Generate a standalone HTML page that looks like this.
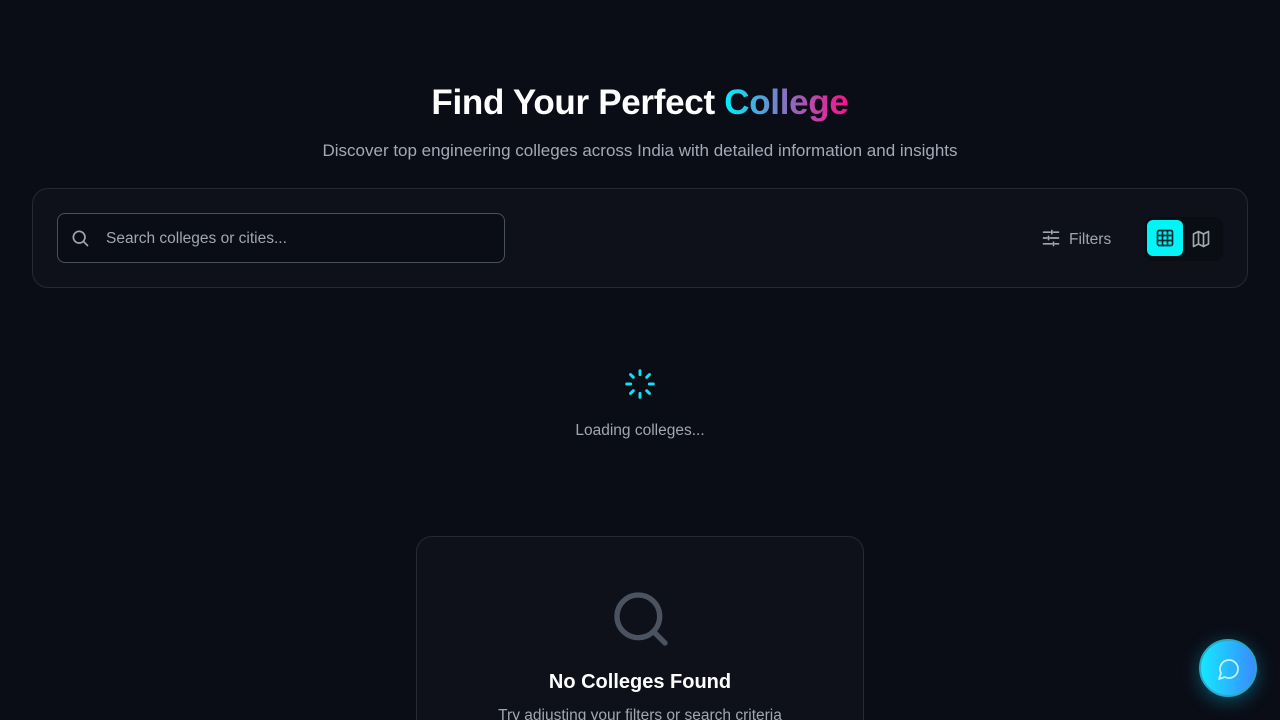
<!DOCTYPE html>
<html><head><meta charset="utf-8"><style>
*{box-sizing:border-box;margin:0;padding:0}
html,body{width:1280px;height:720px;overflow:hidden}
body{background:#0a0d16;font-family:"Liberation Sans",sans-serif;color:#fff;position:relative}
h1{position:absolute;top:83px;left:0;width:1280px;text-align:center;font-size:35px;font-weight:bold;letter-spacing:-0.3px}
.grad{background:linear-gradient(90deg,#00f0ff,#8a6fc0 50%,#ff0f8a);-webkit-background-clip:text;background-clip:text;color:transparent}
.sub{position:absolute;top:141px;width:1280px;text-align:center;font-size:17px;color:#a3a9b6}
.bar{position:absolute;left:32px;top:188px;width:1216px;height:100px;border:1px solid #252a35;border-radius:16px;background:#0e1119}
.search{position:absolute;left:24px;top:24px;width:448px;height:50px;border:1px solid #4a505c;border-radius:8px;background:#0a0d15}
.search span{position:absolute;left:48px;top:16px;font-size:15.5px;color:#a0a6b2}
.filters{position:absolute;top:42px;font-size:15.5px;color:#a0a6b2}
.toggle{position:absolute;left:1112px;top:28px;width:78px;height:44px;border-radius:8px;background:#0a0d14}
.gbtn{position:absolute;left:2px;top:3px;width:36px;height:36px;border-radius:6px;background:#00f5f7}
.loading{position:absolute;top:422px;width:1280px;text-align:center;font-size:15.5px;color:#a0a6b2}
.card{position:absolute;left:416px;top:536px;width:448px;height:220px;border:1px solid #252a35;border-radius:16px;background:#0e1119}
.card h3{position:absolute;top:134px;width:100%;text-align:center;font-size:20px}
.card p{position:absolute;top:170px;width:100%;text-align:center;font-size:15.5px;color:#a0a6b2}
.chat{position:absolute;left:1199px;top:639px;width:58px;height:58px;border-radius:50%;background:linear-gradient(90deg,#14e8ff,#3a8cff);border:2px solid #2aa6c8;box-shadow:0 4px 18px rgba(0,220,255,.35)}
</style></head><body>
<h1>Find Your Perfect <span class="grad">College</span></h1>
<div class="sub">Discover top engineering colleges across India with detailed information and insights</div>
<div class="bar">
 <div class="search">
  <svg style="position:absolute;left:12px;top:14px" width="20" height="20" viewBox="0 0 24 24" fill="none" stroke="#a0a6b2" stroke-width="2" stroke-linecap="round"><circle cx="11" cy="11" r="7"/><path d="M21 21l-4.3-4.3"/></svg>
  <span>Search colleges or cities...</span>
 </div>
 <svg style="position:absolute;left:1008px;top:39px" width="20" height="20" viewBox="0 0 24 24" fill="none" stroke="#a0a6b2" stroke-width="2" stroke-linecap="round"><path d="M3 5h8M15 5h6M3 12h4M11 12h10M3 19h10M17 19h4M13 3v4M9 10v4M15 17v4"/></svg>
 <div class="filters" style="left:1036px">Filters</div>
 <div class="toggle">
  <div class="gbtn"><svg style="position:absolute;left:8px;top:8px" width="20" height="20" viewBox="0 0 24 24" fill="none" stroke="#0a2a30" stroke-width="2"><rect x="3" y="3" width="18" height="18" rx="2"/><path d="M3 9h18M3 15h18M9 3v18M15 3v18"/></svg></div>
  <svg style="position:absolute;left:46px;top:12px" width="20" height="20" viewBox="0 0 24 24" fill="none" stroke="#a0a6b2" stroke-width="2" stroke-linejoin="round"><path d="M3 6l6-3 6 3 6-3v15l-6 3-6-3-6 3zM9 3v15M15 6v15"/></svg>
 </div>
</div>
<svg style="position:absolute;left:624px;top:368px" width="32" height="32" viewBox="0 0 24 24" fill="none" stroke="#10e0f0" stroke-width="2.2" stroke-linecap="round"><path d="M12 2v3M12 19v3M4.9 4.9l2.1 2.1M17 17l2.1 2.1M2 12h3M19 12h3M4.9 19.1L7 17M17 7l2.1-2.1"/></svg>
<div class="loading">Loading colleges...</div>
<div class="card">
 <svg style="position:absolute;left:192px;top:50px" width="64" height="64" viewBox="0 0 24 24" fill="none" stroke="#4b5260" stroke-width="2" stroke-linecap="round"><circle cx="11" cy="11" r="8"/><path d="M21 21l-4.3-4.3"/></svg>
 <h3>No Colleges Found</h3>
 <p>Try adjusting your filters or search criteria</p>
</div>
<div class="chat"><svg style="position:absolute;left:16px;top:16px" width="24" height="24" viewBox="0 0 24 24" fill="none" stroke="#bff4ff" stroke-width="1.8" stroke-linejoin="round"><path d="M7.9 20A9 9 0 1 0 4 16.1L2 22z"/></svg></div>
</body></html>
